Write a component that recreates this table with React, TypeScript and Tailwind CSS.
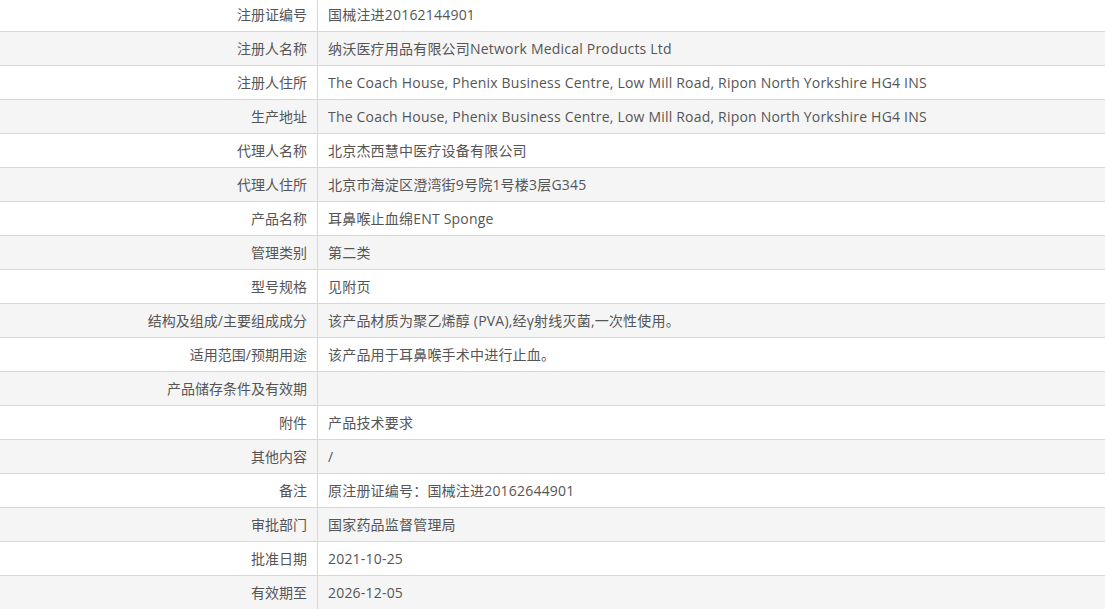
import React from "react";

const rows: [string, string][] = [
  ["注册证编号", "国械注进20162144901"],
  ["注册人名称", "纳沃医疗用品有限公司Network Medical Products Ltd"],
  ["注册人住所", "The Coach House, Phenix Business Centre, Low Mill Road, Ripon North Yorkshire HG4 INS"],
  ["生产地址", "The Coach House, Phenix Business Centre, Low Mill Road, Ripon North Yorkshire HG4 INS"],
  ["代理人名称", "北京杰西慧中医疗设备有限公司"],
  ["代理人住所", "北京市海淀区澄湾街9号院1号楼3层G345"],
  ["产品名称", "耳鼻喉止血绵ENT Sponge"],
  ["管理类别", "第二类"],
  ["型号规格", "见附页"],
  ["结构及组成/主要组成成分", "该产品材质为聚乙烯醇 (PVA),经γ射线灭菌,一次性使用。"],
  ["适用范围/预期用途", "该产品用于耳鼻喉手术中进行止血。"],
  ["产品储存条件及有效期", ""],
  ["附件", "产品技术要求"],
  ["其他内容", "/"],
  ["备注", "原注册证编号：国械注进20162644901"],
  ["审批部门", "国家药品监督管理局"],
  ["批准日期", "2021-10-25"],
  ["有效期至", "2026-12-05"],
];

export default function App() {
  return (
    <div className="h-[609px] overflow-hidden bg-white font-['Open_Sans','Noto_Sans_CJK_SC',sans-serif] text-[14px] text-[#555]">
      <div className="-mt-[2px]">
        {rows.map(([label, value], i) => (
          <div
            key={label}
            className={`grid h-[34px] grid-cols-[318px_1fr] border-b border-[#d8d8d8] ${i % 2 === 1 ? "bg-[#f5f5f5]" : "bg-white"}`}
          >
            <div className="flex items-center justify-end border-r border-[#d8d8d8] pr-[10px]">{label}</div>
            <div className="flex items-center pl-[10px] whitespace-nowrap tracking-[0.2px]">{value}</div>
          </div>
        ))}
      </div>
    </div>
  );
}
